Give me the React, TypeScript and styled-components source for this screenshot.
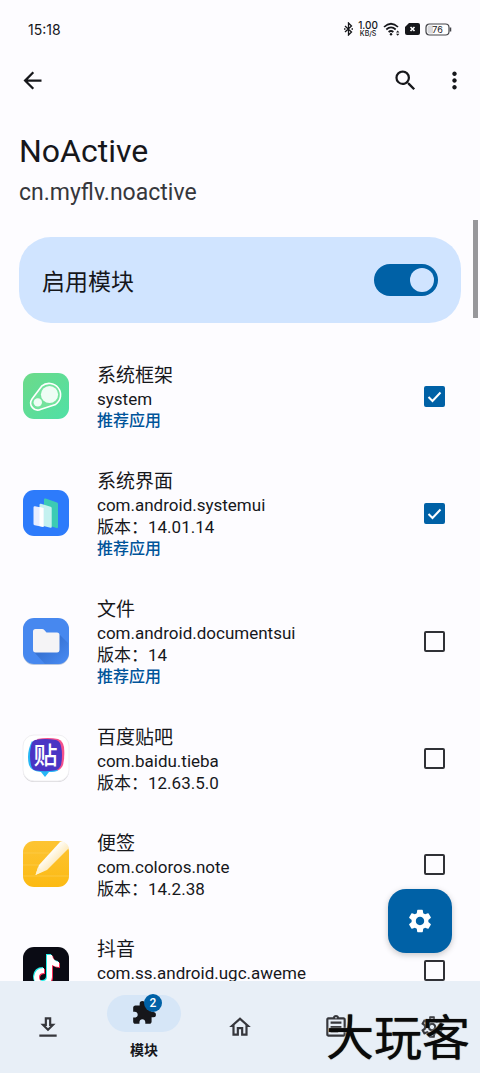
import React, { useState } from "react";
import styled, { createGlobalStyle } from "styled-components";
import {
  MdArrowBack,
  MdExtension,
  MdMoreVert,
  MdOutlineAssignment,
  MdOutlineHome,
  MdOutlineSettings,
  MdSearch,
  MdSettings,
} from "react-icons/md";

const c = {
  bg: "#fdfcff",
  ink: "#16171b",
  soft: "#36373c",
  primary: "#0061a6",
  container: "#d0e4ff",
  nav: "#e8eff7",
  pill: "#d6e6f7",
};

const GlobalStyle = createGlobalStyle`
  * { box-sizing: border-box; }
  body {
    margin: 0;
    background: ${c.bg};
    color: ${c.ink};
    font-family: Roboto, "Noto Sans CJK SC", sans-serif;
  }
  button { border: 0; padding: 0; background: none; color: inherit; font: inherit; }
  svg { display: block; }
`;

const Screen = styled.div`
  position: relative;
  display: flex;
  flex-direction: column;
  height: 100vh;
  overflow: hidden;
`;

const StatusBar = styled.div`
  flex: none;
  display: flex;
  align-items: center;
  justify-content: space-between;
  height: 58px;
  padding: 0 28px;
  font-family: Inter, sans-serif;
  font-size: 14px;
`;

const StatusIcons = styled.div`
  display: flex;
  align-items: center;
  gap: 5px;
`;

const Speed = styled.div`
  display: flex;
  flex-direction: column;
  align-items: center;
  font-size: 10px;
  line-height: 9px;
  font-weight: 500;
`;

const SpeedUnit = styled.span`
  font-size: 7px;
  line-height: 8px;
`;

const AppBar = styled.header`
  flex: none;
  display: flex;
  align-items: center;
  gap: 22px;
  height: 44px;
  padding: 0 12px 0 19px;
`;

const IconButton = styled.button<{ $push?: boolean }>`
  margin-right: ${(p) => (p.$push ? "auto" : "0")};
  font-size: 27px;
`;

const Content = styled.main`
  position: relative;
  flex: 1;
  min-height: 0;
  overflow: hidden;
`;

const Heading = styled.div`
  padding: 30px 19px 0;
`;

const Title = styled.h1`
  margin: 0;
  font-size: 32px;
  line-height: 38px;
  font-weight: 400;
`;

const Subtitle = styled.p`
  margin: 9px 0 0;
  font-size: 23px;
  line-height: 28px;
  color: ${c.soft};
`;

const EnableCard = styled.label`
  display: flex;
  align-items: center;
  justify-content: space-between;
  height: 86px;
  margin: 30px 19px 22px;
  padding: 0 23px;
  border-radius: 32px;
  background: ${c.container};
  font-size: 23px;
`;

const Switch = styled.input`
  appearance: none;
  display: flex;
  align-items: center;
  width: 64px;
  height: 32px;
  margin: 0;
  padding: 0 4px;
  border-radius: 16px;
  background: ${c.primary};

  &::before {
    content: "";
    width: 24px;
    height: 24px;
    border-radius: 50%;
    background: ${c.container};
  }
  &:checked::before {
    margin-left: auto;
  }
`;

const AppList = styled.ul`
  margin: 0;
  padding: 0;
  list-style: none;
`;

const AppRow = styled.label`
  display: flex;
  align-items: center;
  gap: 28px;
  padding: 15px 35px 19px 23px;
`;

const AppIcon = styled.svg`
  flex: none;
  width: 46px;
  height: 46px;
  overflow: visible;
`;

const AppText = styled.div`
  flex: 1;
  min-width: 0;
  min-height: 72px;
  padding-top: 4px;
  font-size: 17px;
  line-height: 22px;
`;

const AppName = styled.div`
  font-size: 19px;
  line-height: 24px;
`;

const Recommended = styled.div`
  color: #00549a;
  font-size: 16px;
  font-weight: 500;
`;

const CheckWrap = styled.span`
  display: grid;
  flex: none;
  place-items: center;
  > * { grid-area: 1 / 1; }
`;

const Check = styled.input`
  appearance: none;
  width: 21px;
  height: 21px;
  margin: 0;
  border: 2px solid #303136;
  border-radius: 2px;

  &:checked {
    border-color: ${c.primary};
    background: ${c.primary};
  }
  & + svg { visibility: hidden; pointer-events: none; }
  &:checked + svg { visibility: visible; }
`;

const ScrollThumb = styled.div`
  position: absolute;
  top: 118px;
  right: 2px;
  width: 5px;
  height: 98px;
  background: #97979b;
`;

const Fab = styled.button`
  position: absolute;
  right: 28px;
  bottom: 28px;
  display: grid;
  place-items: center;
  width: 64px;
  height: 64px;
  border-radius: 18px;
  background: ${c.primary};
  color: #fff;
  font-size: 28px;
  box-shadow: 0 2px 6px rgba(0, 0, 0, 0.22);
`;

const NavBar = styled.nav`
  flex: none;
  display: grid;
  grid-template-columns: repeat(5, 1fr);
  height: 92px;
  background: ${c.nav};
`;

const NavItem = styled.button`
  display: flex;
  flex-direction: column;
  align-items: center;
  justify-content: center;
  gap: 8px;
  color: ${c.soft};
  font-size: 26px;
`;

const NavPill = styled.span`
  position: relative;
  display: grid;
  place-items: center;
  width: 74px;
  height: 37px;
  border-radius: 19px;
  background: ${c.pill};
  color: ${c.ink};
`;

const Badge = styled.span`
  position: absolute;
  top: -1px;
  left: 37px;
  width: 18px;
  height: 18px;
  border-radius: 9px;
  background: ${c.primary};
  color: #fff;
  font-size: 12px;
  line-height: 18px;
  font-weight: 500;
`;

const NavLabel = styled.span`
  font-size: 14px;
  line-height: 20px;
  font-weight: 700;
  color: ${c.ink};
`;

const Watermark = styled.div`
  position: absolute;
  right: 10px;
  bottom: 10px;
  font-size: 48px;
  line-height: 48px;
  font-weight: 400;
  color: #0a0a0a;
  text-shadow: 0 0 1px #0a0a0a, 0 0 2px #fff;
  pointer-events: none;
`;

const DownloadIcon = () => (
  <svg width="1em" height="1em" viewBox="0 0 24 24" fill="currentColor">
    <path d="M19 9h-4V3H9v6H5l7 7 7-7zm-8 2V5h2v6h1.17L12 13.17 9.83 11H11zm-7 8h16v2H4z" />
  </svg>
);

const SystemIcon = () => (
  <AppIcon viewBox="0 0 46 46">
    <defs>
      <linearGradient id="green" x1="0" y1="0" x2="1" y2="1">
        <stop offset="0" stopColor="#6dda89" />
        <stop offset="1" stopColor="#4fe0a6" />
      </linearGradient>
    </defs>
    <rect width="46" height="46" rx="11" fill="url(#green)" />
    <path
      d="M18.6 13.2A11.5 11.5 0 1 1 32.6 31.4L18 36.2A7 7 0 0 1 9 26Z"
      fill="#74e39d"
      stroke="#fff"
      strokeWidth="1.6"
      strokeLinejoin="round"
    />
    <circle cx="26.5" cy="21.5" r="8.6" fill="#effdf5" />
    <circle cx="14.8" cy="29.4" r="4.2" fill="#effdf5" />
  </AppIcon>
);

const SystemUiIcon = () => (
  <AppIcon viewBox="0 0 46 46">
    <rect width="46" height="46" rx="11" fill="#2d7bfb" />
    <path d="M21 9.5Q21 8 22.6 8.5L34 12.4Q35 12.8 35 14V37Q35 38.5 33.5 38L21 34Z" fill="#3ccbb4" />
    <path d="M16.5 15Q16.5 13.4 18 13.8L27.6 16.7Q28.7 17 28.7 18V37Q28.7 38 27.5 37.7L16.5 35Z" fill="#c4f1f0" />
    <path d="M10.5 17.5Q10.5 16 12 16.3L20.5 18V37L11.6 35.3Q10.5 35 10.5 34Z" fill="#e8edff" />
    <path d="M16.5 17V36L20.5 37V18Z" fill="#fff" />
  </AppIcon>
);

const FilesIcon = () => (
  <AppIcon viewBox="0 0 46 46">
    <defs>
      <linearGradient id="folderShade" x1="0" y1="0" x2="1" y2="1">
        <stop offset="0.4" stopColor="#3773d4" />
        <stop offset="0.9" stopColor="#4788ef" />
      </linearGradient>
    </defs>
    <rect y="1" width="46" height="46" rx="11" fill="#b9c7dd" />
    <rect width="46" height="46" rx="11" fill="#4788ef" />
    <path d="M36 16L45 25V37Q43 46 34 46H22L11 34Z" fill="url(#folderShade)" />
    <path d="M10 13.5Q10 11 12.5 11H19Q20.5 11 21.5 12.2L23.5 14.5H34Q36.5 14.5 36.5 17V31.5Q36.5 34.5 34 34.5H12.5Q10 34.5 10 31.5Z" fill="#f5f4f6" />
  </AppIcon>
);

const TiebaIcon = () => (
  <AppIcon viewBox="0 0 46 46">
    <rect y="1" width="46" height="46" rx="11" fill="#d4d3d7" />
    <rect width="46" height="46" rx="11" fill="#fff" stroke="#f0eff2" strokeWidth="1" />
    <path d="M14 4Q25 2 35 4Q40 6 41 12Q42 22 40 30Q38 35 33 36L20 20Z" fill="#f4518c" />
    <path d="M9 6Q3 18 6 30Q8 36 18 37L22 42L26 37Q32 37 35 35.5L20 18Z" fill="#27b7f5" />
    <path d="M12 5Q22 3 33 5Q37 6 38 11Q40 20 38 30Q36 35 31 35.5Q22 37 13 35.5Q9 35 8 30Q6 20 8 11Q9 6 12 5Z" fill="#4a35c4" />
    <text x="22.5" y="29" textAnchor="middle" fontFamily="Noto Sans CJK SC, sans-serif" fontWeight="500" fontSize="24" fill="#fff">
      贴
    </text>
  </AppIcon>
);

const NoteIcon = () => (
  <AppIcon viewBox="0 0 46 46">
    <defs>
      <linearGradient id="yellow" x1="0" y1="0" x2="0" y2="1">
        <stop offset="0" stopColor="#fdc433" />
        <stop offset="1" stopColor="#fcba13" />
      </linearGradient>
      <linearGradient id="pen" x1="0" y1="0" x2="1" y2="1">
        <stop offset="0.35" stopColor="#fff" />
        <stop offset="0.75" stopColor="#fde09a" />
      </linearGradient>
    </defs>
    <rect width="46" height="46" rx="11" fill="url(#yellow)" />
    <path d="M0 12H26M0 24H16M0 35H46" stroke="#fdcb4a" strokeWidth="0.8" />
    <path d="M12.5 34L16 24L37 1Q39 0 41 1Q45 3 46 7L24 29Z" fill="url(#pen)" />
    <path d="M12.5 34L15 26L20 30Z" fill="#fff2cd" />
  </AppIcon>
);

const notePath =
  "M24 8H29Q30 14 36 15V20Q32 20 29 18V30Q28 39 19 39Q11 38 11 30Q12 21 21 21V26Q16 26 16 30Q16 34 19.5 34Q24 34 24 30Z";

const DouyinIcon = () => (
  <AppIcon viewBox="0 0 46 46">
    <rect width="46" height="46" rx="11" fill="#0a0b14" />
    <path d={notePath} fill="#24ede8" transform="translate(-1 -1)" />
    <path d={notePath} fill="#fb2e56" transform="translate(1 1)" />
    <path d={notePath} fill="#fff" />
  </AppIcon>
);

interface AppEntry {
  name: string;
  pkg: string;
  version?: string;
  recommended?: boolean;
  checked?: boolean;
  Icon: React.FC;
}

const apps: AppEntry[] = [
  { name: "系统框架", pkg: "system", recommended: true, checked: true, Icon: SystemIcon },
  { name: "系统界面", pkg: "com.android.systemui", version: "14.01.14", recommended: true, checked: true, Icon: SystemUiIcon },
  { name: "文件", pkg: "com.android.documentsui", version: "14", recommended: true, Icon: FilesIcon },
  { name: "百度贴吧", pkg: "com.baidu.tieba", version: "12.63.5.0", Icon: TiebaIcon },
  { name: "便签", pkg: "com.coloros.note", version: "14.2.38", Icon: NoteIcon },
  { name: "抖音", pkg: "com.ss.android.ugc.aweme", Icon: DouyinIcon },
];

const AppItem = ({ app }: { app: AppEntry }) => {
  const [on, setOn] = useState(!!app.checked);
  return (
    <li>
      <AppRow>
        <app.Icon />
        <AppText>
          <AppName>{app.name}</AppName>
          <div>{app.pkg}</div>
          {app.version && <div>版本：{app.version}</div>}
          {app.recommended && <Recommended>推荐应用</Recommended>}
        </AppText>
        <CheckWrap>
          <Check type="checkbox" checked={on} onChange={() => setOn(!on)} />
          <svg width="21" height="21" viewBox="0 0 21 21" fill="none" stroke="#fff" strokeWidth="2">
            <path d="M4.5 11L8.5 15L16.5 6.5" />
          </svg>
        </CheckWrap>
      </AppRow>
    </li>
  );
};

export default function App() {
  const [enabled, setEnabled] = useState(true);
  return (
    <>
      <GlobalStyle />
      <Screen>
        <StatusBar>
          <span>15:18</span>
          <StatusIcons>
            <svg width="9" height="14" viewBox="0 0 9 14" fill="none" stroke={c.ink} strokeWidth="1.3">
              <path d="M1 4L7.5 10L4.5 13V1L7.5 4L1 10" />
              <path d="M0 7H1.5M7.5 7H9" />
            </svg>
            <Speed>
              <span>1.00</span>
              <SpeedUnit>KB/S</SpeedUnit>
            </Speed>
            <svg width="17" height="14" viewBox="0 0 17 14" fill="none" stroke={c.ink} strokeWidth="1.7">
              <path d="M1 5Q8 -1.5 15 5M3.3 7.5Q8 3.2 12.7 7.5M5.6 10Q8 8 10.4 10" />
              <circle cx="8" cy="12.3" r="1.2" fill={c.ink} stroke="none" />
              <path d="M13 10.5L14.7 8.5L16.4 10.5ZM13 11.7L14.7 13.7L16.4 11.7Z" fill={c.ink} stroke="none" />
            </svg>
            <svg width="15" height="12" viewBox="0 0 15 12">
              <path d="M4 0H13Q15 0 15 2V10Q15 12 13 12H2Q0 12 0 10V4Z" fill={c.ink} />
              <path d="M5.5 4L9.5 8M9.5 4L5.5 8" stroke="#fff" strokeWidth="1.7" />
            </svg>
            <svg width="27" height="13" viewBox="0 0 27 13">
              <rect x="1" y="1" width="23" height="11" rx="3.5" fill="#fff" stroke="#44454a" strokeWidth="1.2" />
              <path d="M4 2.5H8V10.5H4Q2.5 10.5 2.5 8.5V4.5Q2.5 2.5 4 2.5Z" fill="#d9d9dd" />
              <path d="M25.5 4.5V8.5" stroke="#44454a" strokeWidth="1.5" />
              <text x="12.5" y="9.8" textAnchor="middle" fontFamily="Inter, sans-serif" fontSize="9" fill={c.ink}>
                76
              </text>
            </svg>
          </StatusIcons>
        </StatusBar>
        <AppBar>
          <IconButton $push aria-label="返回"><MdArrowBack /></IconButton>
          <IconButton aria-label="搜索"><MdSearch /></IconButton>
          <IconButton aria-label="更多"><MdMoreVert /></IconButton>
        </AppBar>
        <Content>
          <Heading>
            <Title>NoActive</Title>
            <Subtitle>cn.myflv.noactive</Subtitle>
          </Heading>
          <EnableCard>
            启用模块
            <Switch type="checkbox" role="switch" checked={enabled} onChange={() => setEnabled(!enabled)} />
          </EnableCard>
          <AppList>
            {apps.map((app) => (
              <AppItem key={app.pkg} app={app} />
            ))}
          </AppList>
          <ScrollThumb />
          <Fab aria-label="设置"><MdSettings /></Fab>
        </Content>
        <NavBar>
          <NavItem aria-label="下载"><DownloadIcon /></NavItem>
          <NavItem>
            <NavPill>
              <MdExtension />
              <Badge>2</Badge>
            </NavPill>
            <NavLabel>模块</NavLabel>
          </NavItem>
          <NavItem aria-label="主页"><MdOutlineHome /></NavItem>
          <NavItem aria-label="日志"><MdOutlineAssignment /></NavItem>
          <NavItem aria-label="系统设置"><MdOutlineSettings /></NavItem>
        </NavBar>
        <Watermark>大玩客</Watermark>
      </Screen>
    </>
  );
}
